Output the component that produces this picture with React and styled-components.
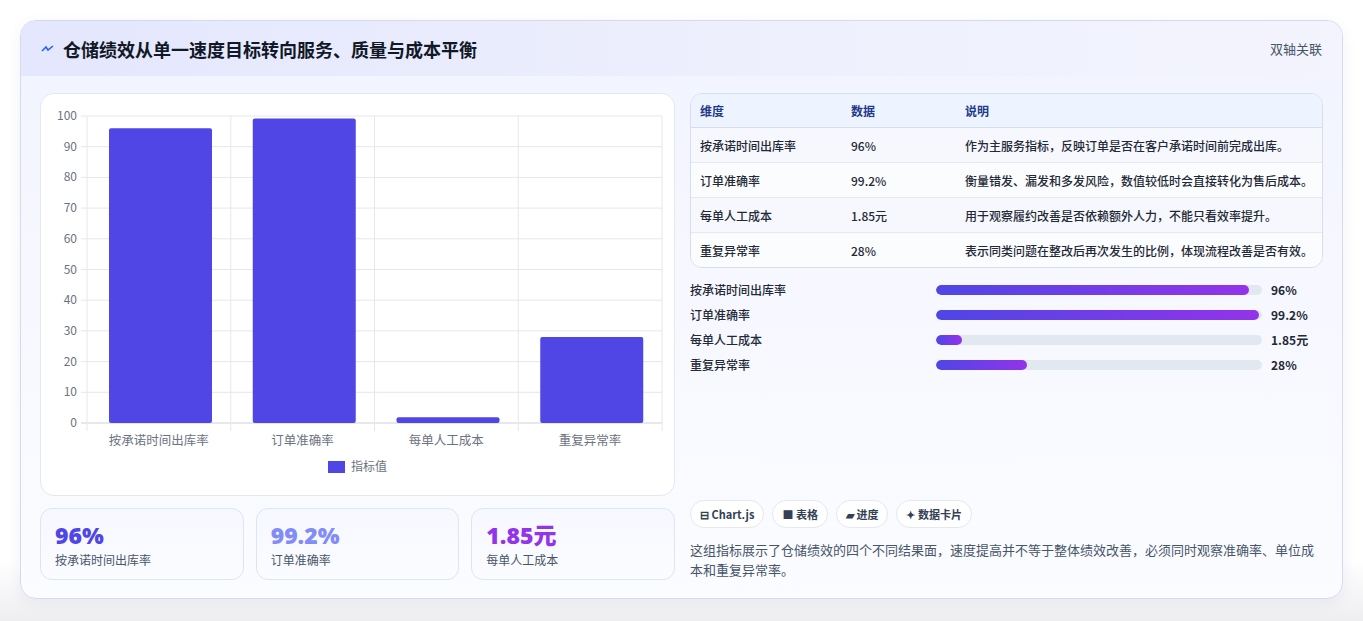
import React from "react";
import styled, { createGlobalStyle } from "styled-components";

const G = createGlobalStyle`
  html,body{margin:0;padding:0;background:#fff;}
  body{font-family:"Noto Sans CJK SC","Noto Sans",sans-serif;}
  #root{height:621px;background:linear-gradient(#fff 0,#fff 560px,#eeeef1 621px);}
`;
const Page = styled.div`padding:20px 20px 0 20px;`;
const Card = styled.div`
  height:579px;box-sizing:border-box;border:1px solid #d5daf0;border-radius:16px;overflow:hidden;
  background:linear-gradient(180deg,#f1f3ff 0%,#f7f8ff 50%,#fbfcff 100%);
  display:flex;flex-direction:column;box-shadow:0 4px 14px rgba(80,90,160,.08);
`;
const Header = styled.div`
  height:55px;flex:none;display:flex;align-items:center;justify-content:space-between;padding:0 20px 0 20px;
  background:linear-gradient(90deg,#e4e7fd,#eef0fd 60%,#f3f4fd);
`;
const Title = styled.h1`margin:0;font-size:18px;font-weight:700;color:#111827;display:flex;align-items:center;gap:8px;`;
const Side = styled.span`font-size:13px;color:#475569;`;
const Body = styled.div`flex:1;display:grid;grid-template-columns:635px 633px;gap:15px;padding:17px 19px 18px 19px;`;
const Col = styled.div`display:flex;flex-direction:column;gap:12px;min-height:0;`;
const ChartBox = styled.div`flex:1;background:#fff;border:1px solid #e3e8f3;border-radius:14px;`;
const Stats = styled.div`display:grid;grid-template-columns:repeat(3,1fr);gap:12px;height:72px;`;
const Stat = styled.div`border:1px solid #dbe5f3;border-radius:12px;background:linear-gradient(#f6f8ff,#fbfcff);padding:10px 14px;display:flex;flex-direction:column;justify-content:center;`;
const StatV = styled.div`font-family:"Open Sans","Noto Sans CJK SC",sans-serif;font-size:23px;font-weight:800;line-height:28px;color:${p=>p.c};`;
const StatL = styled.div`font-size:12px;color:#475569;margin-top:2px;`;
const RCol = styled.div`display:flex;flex-direction:column;justify-content:space-between;`;
const Table = styled.table`width:100%;border-collapse:separate;border-spacing:0;border:1px solid #d6deec;border-radius:12px;overflow:hidden;font-size:12px;
  th{background:#eef4ff;color:#1e3a8a;text-align:left;font-weight:700;height:33px;padding:0 9px;border-bottom:1px solid #d6deec;}
  td{height:34px;padding:0 9px;color:#1f2937;font-weight:500;border-bottom:1px solid #e3e8f2;}
  tr:nth-child(odd) td{background:#f6f8fd;} tr:nth-child(even) td{background:#fbfcfe;}
  tr:last-child td{border-bottom:none;}
`;
const Bars = styled.div`display:flex;flex-direction:column;gap:6px;margin-top:12px;`;
const BarRow = styled.div`display:grid;grid-template-columns:237px 326px auto;align-items:center;column-gap:9px;height:19px;font-size:12px;color:#1f2937;font-weight:500;`;
const Track = styled.div`height:10px;border-radius:5px;background:#e2e8f0;overflow:hidden;`;
const Fill = styled.div`height:100%;border-radius:5px;background:linear-gradient(90deg,#4f46e5,#9333ea);`;
const Val = styled.span`font-weight:700;color:#1f2937;`;
const Tags = styled.div`display:flex;gap:8px;`;
const Tag = styled.span`height:28px;box-sizing:border-box;border:1px solid #e3e8f2;border-radius:14px;background:#fff;padding:0 9px;display:flex;align-items:center;gap:3px;font-size:11px;font-weight:700;color:#334155;`;
const Desc = styled.p`margin:12px 0 0;font-size:13px;line-height:20px;color:#475569;`;

const labels=["按承诺时间出库率","订单准确率","每单人工成本","重复异常率"];
const vals=[96,99.2,1.85,28];
function Chart(){
  const x0=46,x1=621,yT=22,yB=329,cw=(x1-x0)/4;
  const y=v=>yB-(v/100)*(yB-yT);
  return(<svg width="633" height="401" style={{display:"block"}} fontFamily="Noto Sans CJK SC, sans-serif">
    {[0,10,20,30,40,50,60,70,80,90,100].map(t=>(<g key={t}>
      <line x1={x0-6} x2={x1} y1={y(t)} y2={y(t)} stroke={t===0?"#cbd2dc":"#e5e7eb"}/>
      <text x={x0-10} y={y(t)+4} textAnchor="end" fontSize="12" fill="#6b7280">{t}</text></g>))}
    {[0,1,2,3,4].map(i=><line key={i} x1={x0+i*cw} x2={x0+i*cw} y1={yT} y2={yB+8} stroke="#e5e7eb"/>)}
    {vals.map((v,i)=>(<g key={i}>
      <rect x={x0+i*cw+22} width={103} y={y(v)} height={yB-y(v)} rx="2" fill="#4f46e5"/>
      <text x={x0+i*cw+cw/2} y={yB+22} textAnchor="middle" fontSize="12.5" fill="#6b7280">{labels[i]}</text></g>))}
    <rect x="287" y="367" width="17" height="12" fill="#4f46e5"/>
    <text x="310" y="377" fontSize="12" fill="#6b7280">指标值</text>
  </svg>);
}

export default function App(){
  return(<Page><G/><Card>
    <Header><Title><svg width="14" height="10" viewBox="0 0 14 10"><path d="M1 7 L5 3 L7 6 L12 2" stroke="#2563eb" strokeWidth="1.6" fill="none"/></svg>仓储绩效从单一速度目标转向服务、质量与成本平衡</Title><Side>双轴关联</Side></Header>
    <Body>
      <Col>
        <ChartBox><Chart/></ChartBox>
        <Stats>
          <Stat><StatV c="#4f46e5">96%</StatV><StatL>按承诺时间出库率</StatL></Stat>
          <Stat><StatV c="#818cf8">99.2%</StatV><StatL>订单准确率</StatL></Stat>
          <Stat><StatV c="#9333ea">1.85元</StatV><StatL>每单人工成本</StatL></Stat>
        </Stats>
      </Col>
      <RCol>
        <div>
          <Table><thead><tr><th style={{width:133}}>维度</th><th style={{width:96}}>数据</th><th>说明</th></tr></thead><tbody>
            <tr><td>按承诺时间出库率</td><td>96%</td><td>作为主服务指标，反映订单是否在客户承诺时间前完成出库。</td></tr>
            <tr><td>订单准确率</td><td>99.2%</td><td>衡量错发、漏发和多发风险，数值较低时会直接转化为售后成本。</td></tr>
            <tr><td>每单人工成本</td><td>1.85元</td><td>用于观察履约改善是否依赖额外人力，不能只看效率提升。</td></tr>
            <tr><td>重复异常率</td><td>28%</td><td>表示同类问题在整改后再次发生的比例，体现流程改善是否有效。</td></tr>
          </tbody></Table>
          <Bars>{labels.map((l,i)=>(<BarRow key={l}><span>{l}</span><Track><Fill style={{width:`${[96,99.2,8,28][i]}%`}}/></Track><Val>{["96%","99.2%","1.85元","28%"][i]}</Val></BarRow>))}</Bars>
        </div>
        <div>
          <Tags><Tag>⊟ Chart.js</Tag><Tag>■ 表格</Tag><Tag>▰ 进度</Tag><Tag>✦ 数据卡片</Tag></Tags>
          <Desc>这组指标展示了仓储绩效的四个不同结果面，速度提高并不等于整体绩效改善，必须同时观察准确率、单位成本和重复异常率。</Desc>
        </div>
      </RCol>
    </Body>
  </Card></Page>);
}
